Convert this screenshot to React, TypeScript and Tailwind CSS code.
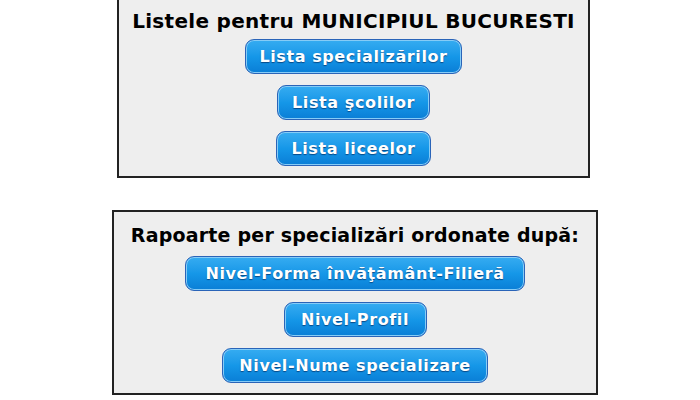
import React from "react";

const font = { fontFamily: '"DejaVu Sans", Verdana, Tahoma, sans-serif' };

function BlueButton({ label, width }: { label: string; width: string }) {
  return (
    <button
      className={`${width} h-[35px] rounded-[9px] border border-[#2a64b8] bg-gradient-to-b from-[#35acf1] via-[#1597e8] to-[#0a7ed6] text-[16px] font-bold text-white tracking-[0.6px] shadow-[inset_0_0_0_1px_#86ccf7] [text-shadow:0_1px_1px_#084a88]`}
    >
      {label}
    </button>
  );
}

function Panel({
  title,
  width,
  buttons,
  className = "",
  titleSize,
  gapTop,
}: {
  title: string;
  width: string;
  buttons: { label: string; width: string }[];
  className?: string;
  titleSize: string;
  gapTop: string;
}) {
  return (
    <div
      className={`${width} ${className} flex flex-col items-center border-2 border-[#222] bg-[#eeeeee] pb-[10px]`}
    >
      <div className={`${titleSize} font-bold leading-[24px] text-black`}>
        {title}
      </div>
      <div className={`${gapTop} flex flex-col items-center gap-[11px]`}>
        {buttons.map((b) => (
          <BlueButton key={b.label} label={b.label} width={b.width} />
        ))}
      </div>
    </div>
  );
}

export default function App() {
  return (
    <div className="h-[400px] w-[700px] overflow-hidden bg-white" style={font}>
      {/* Liste */}
      <Panel
        className="ml-[117px] -mt-[2px] pt-[9px]"
        titleSize="text-[20px] tracking-[0.3px]"
        gapTop="mt-[6px]"
        width="w-[473px]"
        title="Listele pentru MUNICIPIUL BUCURESTI"
        buttons={[
          { label: "Lista specializărilor", width: "w-[217px]" },
          { label: "Lista şcolilor", width: "w-[153px]" },
          { label: "Lista liceelor", width: "w-[155px]" },
        ]}
      />

      {/* Rapoarte */}
      <Panel
        className="ml-[112px] mt-[32px] pt-[11px]"
        titleSize="text-[19px] tracking-[0.2px]"
        gapTop="mt-[9px]"
        width="w-[486px]"
        title="Rapoarte per specializări ordonate după:"
        buttons={[
          { label: "Nivel-Forma învăţământ-Filieră", width: "w-[340px]" },
          { label: "Nivel-Profil", width: "w-[143px]" },
          { label: "Nivel-Nume specializare", width: "w-[266px]" },
        ]}
      />
    </div>
  );
}
